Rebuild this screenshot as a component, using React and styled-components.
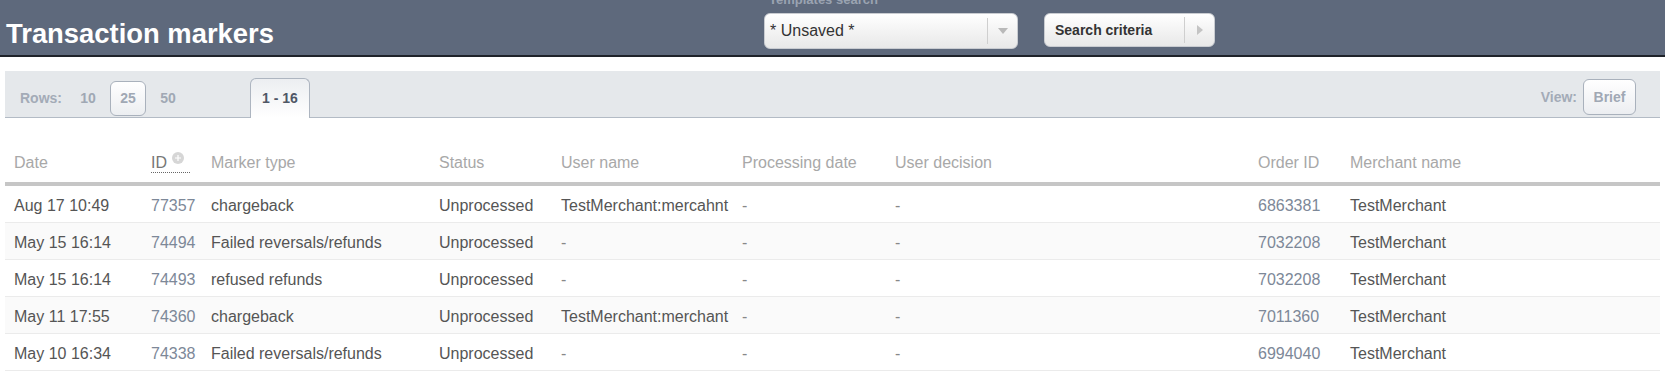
import React from "react";
import styled, { createGlobalStyle } from "styled-components";

const GlobalStyle = createGlobalStyle`
  html, body {
    margin: 0;
    padding: 0;
    background: #fff;
  }
  body {
    font-family: "Liberation Sans", Arial, sans-serif;
  }
`;

const HeaderBar = styled.header`
  display: flex;
  align-items: flex-start;
  height: 55px;
  background: #5e697c;
  border-bottom: 2px solid #1f232a;
  overflow: hidden;
`;

const Title = styled.h1`
  flex: 0 0 758px;
  margin: 18px 0 0;
  padding-left: 6px;
  font-size: 27.4px;
  line-height: 32px;
  font-weight: bold;
  color: #fff;
  white-space: nowrap;
`;

const SelectGroup = styled.div`
  display: flex;
  flex-direction: column;
  margin-top: -8px;
`;

const FieldLabel = styled.label`
  padding-left: 5px;
  margin-bottom: 6px;
  font-size: 13px;
  line-height: 15px;
  font-weight: bold;
  color: #9aa3b1;
  white-space: nowrap;
`;

const Control = styled.div`
  box-sizing: border-box;
  display: flex;
  align-items: center;
  width: ${(p) => p.width}px;
  height: ${(p) => p.height}px;
  margin-top: ${(p) => p.top || 0}px;
  margin-left: ${(p) => p.left || 0}px;
  border: 1px solid #c9ccd1;
  border-radius: 6px;
  background: linear-gradient(#ffffff, #e8e8e8);
`;

const ControlText = styled.span`
  flex: 1;
  padding-left: ${(p) => p.pad}px;
  font-size: ${(p) => (p.bold ? 14 : 16)}px;
  font-weight: ${(p) => (p.bold ? "bold" : "normal")};
  color: #333;
  white-space: nowrap;
`;

const ControlDivider = styled.span`
  width: 1px;
  height: 26px;
  background: #cfcfcf;
`;

const ControlArrow = styled.span`
  display: flex;
  align-items: center;
  justify-content: center;
  width: 29px;
`;

const Content = styled.main`
  padding: 14px 5px 0;
`;

const Toolbar = styled.div`
  display: flex;
  align-items: flex-end;
  height: 46px;
  padding: 0 20px 0 15px;
  background: #e5e8eb;
  border-bottom: 1px solid #b3bbc5;
  font-size: 14px;
  font-weight: bold;
  color: #a3abb7;
`;

const ToolLabel = styled.span`
  line-height: ${(p) => p.h}px;
  margin-bottom: ${(p) => p.mb}px;
  margin-right: ${(p) => p.mr}px;
`;

const ToolButton = styled.span`
  box-sizing: border-box;
  width: ${(p) => p.width}px;
  height: ${(p) => p.height}px;
  margin: 0 4px ${(p) => p.mb}px 0;
  border: 1px solid ${(p) => (p.active ? "#a9b1bc" : "transparent")};
  border-radius: 6px;
  background: ${(p) => (p.active ? "linear-gradient(#ffffff, #eceef1)" : "transparent")};
  line-height: ${(p) => p.height - 2}px;
  text-align: center;
  color: #a0a8b4;
`;

const RangeTab = styled.span`
  box-sizing: border-box;
  height: 40px;
  margin: 0 0 -1px 60px;
  padding: 0 11px;
  border: 1px solid #adb5c0;
  border-bottom: none;
  border-radius: 6px 6px 0 0;
  background: linear-gradient(#eceef1, #ffffff);
  line-height: 38px;
  color: #4f5766;
`;

const Spacer = styled.span`
  flex: 1;
`;

const Table = styled.table`
  width: 100%;
  margin-top: 23px;
  table-layout: fixed;
  border-collapse: collapse;
`;

const HeadCell = styled.th`
  padding: 2px 9px 0;
  text-align: left;
  font-size: 16px;
  font-weight: normal;
  line-height: 39px;
  color: #a8a8a8;
  border-bottom: 4px solid #c6c6c6;
  white-space: nowrap;
`;

const SortLink = styled.span`
  display: inline-flex;
  align-items: flex-start;
  padding-right: 6px;
  line-height: 18px;
  color: #777;
  border-bottom: 1px dotted #666;
`;

const SortIcon = styled.svg`
  margin: -2px 0 0 5px;
`;

const BodyRow = styled.tr`
  background: ${(p) => (p.striped ? "#fafafa" : "#fff")};
`;

const Cell = styled.td`
  padding: 3px 9px 0;
  font-size: 16px;
  line-height: 33px;
  color: ${(p) => p.tone};
  border-bottom: 1px solid #ebebeb;
  white-space: nowrap;
  overflow: hidden;
`;

const columns = [
  { title: "Date", width: 137 },
  { title: "ID", width: 60, sortable: true, tone: "link" },
  { title: "Marker type", width: 228 },
  { title: "Status", width: 122 },
  { title: "User name", width: 181 },
  { title: "Processing date", width: 153 },
  { title: "User decision", width: 363 },
  { title: "Order ID", width: 92, tone: "link" },
  { title: "Merchant name" },
];

const rows = [
  ["Aug 17 10:49", "77357", "chargeback", "Unprocessed", "TestMerchant:mercahnt", "-", "-", "6863381", "TestMerchant"],
  ["May 15 16:14", "74494", "Failed reversals/refunds", "Unprocessed", "-", "-", "-", "7032208", "TestMerchant"],
  ["May 15 16:14", "74493", "refused refunds", "Unprocessed", "-", "-", "-", "7032208", "TestMerchant"],
  ["May 11 17:55", "74360", "chargeback", "Unprocessed", "TestMerchant:merchant", "-", "-", "7011360", "TestMerchant"],
  ["May 10 16:34", "74338", "Failed reversals/refunds", "Unprocessed", "-", "-", "-", "6994040", "TestMerchant"],
];

function toneFor(col, value) {
  if (col.tone === "link") return "#7d8898";
  if (value === "-") return "#888";
  return "#555";
}

export default function App() {
  return (
    <>
      <GlobalStyle />
      <HeaderBar>
        <Title>Transaction markers</Title>
        <SelectGroup>
          <FieldLabel>Templates search</FieldLabel>
          <Control width={254} height={36}>
            <ControlText pad={5}>* Unsaved *</ControlText>
            <ControlDivider />
            <ControlArrow>
              <svg width="10" height="6" viewBox="0 0 10 6">
                <path d="M0 0 L10 0 L5 6 Z" fill="#b9b9b9" />
              </svg>
            </ControlArrow>
          </Control>
        </SelectGroup>
        <Control width={171} height={34} top={13} left={26}>
          <ControlText pad={10} bold>Search criteria</ControlText>
          <ControlDivider />
          <ControlArrow>
            <svg width="6" height="10" viewBox="0 0 6 10">
              <path d="M0 0 L6 5 L0 10 Z" fill="#c4c4c4" />
            </svg>
          </ControlArrow>
        </Control>
      </HeaderBar>
      <Content>
        <Toolbar>
          <ToolLabel h={35} mb={1} mr={8}>Rows:</ToolLabel>
          {[10, 25, 50].map((n) => (
            <ToolButton key={n} width={36} height={35} mb={1} active={n === 25}>
              {n}
            </ToolButton>
          ))}
          <RangeTab>1 - 16</RangeTab>
          <Spacer />
          <ToolLabel h={36} mb={2} mr={6}>View:</ToolLabel>
          <ToolButton width={53} height={36} mb={2} active>
            Brief
          </ToolButton>
        </Toolbar>
        <Table>
          <colgroup>
            {columns.map((c) => (
              <col key={c.title} style={c.width ? { width: c.width } : undefined} />
            ))}
          </colgroup>
          <thead>
            <tr>
              {columns.map((c) => (
                <HeadCell key={c.title}>
                  {c.sortable ? (
                    <SortLink>
                      {c.title}
                      <SortIcon width="12" height="12" viewBox="0 0 12 12">
                        <circle cx="6" cy="6" r="6" fill="#d6d6d6" />
                        <path d="M6 3 V9 M3 6 H9" stroke="#ffffff" strokeWidth="1.2" />
                      </SortIcon>
                    </SortLink>
                  ) : (
                    c.title
                  )}
                </HeadCell>
              ))}
            </tr>
          </thead>
          <tbody>
            {rows.map((r, i) => (
              <BodyRow key={i} striped={i % 2 === 1}>
                {r.map((v, j) => (
                  <Cell key={j} tone={toneFor(columns[j], v)}>
                    {v}
                  </Cell>
                ))}
              </BodyRow>
            ))}
          </tbody>
        </Table>
      </Content>
    </>
  );
}
